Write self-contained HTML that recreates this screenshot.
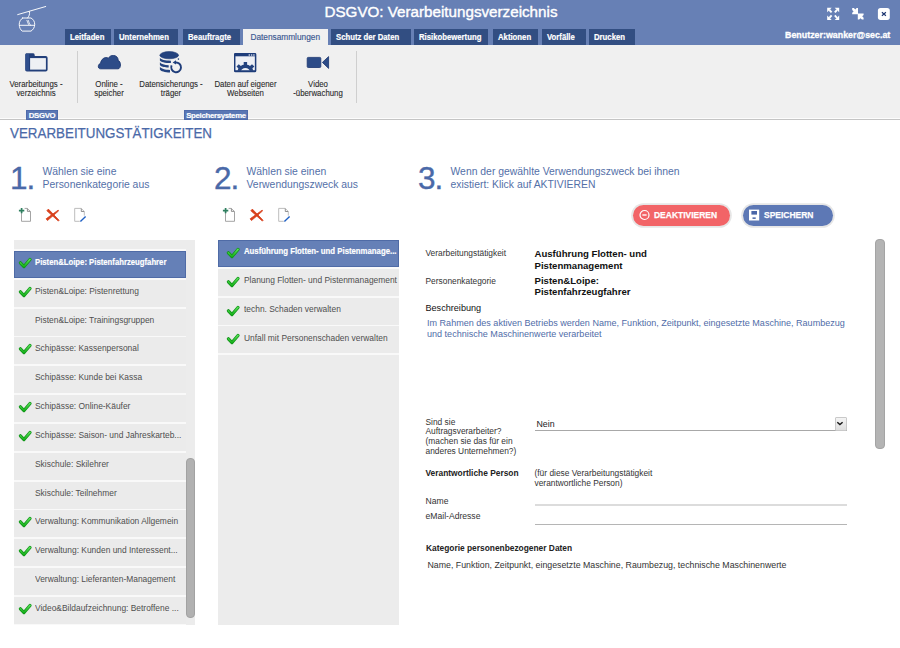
<!DOCTYPE html>
<html><head><meta charset="utf-8">
<style>
*{margin:0;padding:0;box-sizing:border-box}
html,body{width:900px;height:648px;overflow:hidden;background:#fff;font-family:"Liberation Sans",sans-serif}
.a{position:absolute;white-space:nowrap}
#hdr{position:absolute;left:0;top:0;width:900px;height:45px;background:#6780b5}
.tab{position:absolute;top:29.3px;height:15.7px;background:#324e82;color:#fff;font-weight:bold;font-size:8.8px;-webkit-text-stroke:0.2px #fff;line-height:16px;text-align:left;padding-left:4.6px}.tab span{display:inline-block;transform:scaleX(.88);transform-origin:0 0}
.tab.act{background:#f0f0f0;color:#3a5790;font-weight:normal;top:29px;height:16px;padding-left:7.4px;-webkit-text-stroke:0.15px #3a5790}.tab.act span{transform:none}
#rib{position:absolute;left:0;top:45px;width:900px;height:75px;background:#f0f0f0;border-bottom:1px solid #c4c4c4;box-shadow:inset 0 -1px 0 #fcfcfc}
.rl{position:absolute;font-size:8.7px;color:#2a2a2a;text-align:center;line-height:9.4px;white-space:nowrap;transform:scaleX(0.9);transform-origin:50% 0;-webkit-text-stroke:0.1px #2a2a2a}
.sep{position:absolute;width:1px;background:#cfcfcf}
.glab{position:absolute;top:109.8px;height:9.8px;background:#5a77b4;border:1px solid #4d6bab;color:#fff;font-weight:bold;font-size:7.8px;letter-spacing:-0.3px;line-height:9px;padding-top:0.6px;text-align:center;-webkit-text-stroke:0.15px #fff}

.step{font-size:31.5px;color:#4a69a8;line-height:30px;letter-spacing:-1px;-webkit-text-stroke:0.35px #4a69a8}
.stxt{font-size:10.4px;color:#5470a8;line-height:13px}
.btn{height:21px;border-radius:11px;box-shadow:0 0 0 1.8px #e6e6e6;color:#fff;font-weight:bold;font-size:9.8px;line-height:21px;-webkit-text-stroke:0.25px #fff}
.btn span{position:absolute;top:0}.btn .bt{transform:scaleX(0.865);transform-origin:0 50%;top:-1.2px}
.btn .ic{top:4.5px;line-height:0}
.it{position:absolute;height:27px;background:#ebebeb;font-size:9.3px;color:#4f4f4f;line-height:12px;white-space:nowrap;overflow:hidden}
.it.sel{background:#6580b7;color:#fff;font-weight:bold;border:1px solid #4f6ba6;font-size:9.1px;-webkit-text-stroke:0.2px #fff}
.it .ck{position:absolute;left:0px;top:0px}
.it .tx{position:absolute;left:21px;top:5px;transform:scaleX(0.905);transform-origin:0 0}
.it.sel .tx{transform:scaleX(0.85);margin-left:-1px;margin-top:-1.5px}
.it.sel .ck{margin-left:-1px;margin-top:-1px}
.it.c2 .ck{margin-top:1px}
.it.c2 .tx{margin-top:0.3px}
.it.c2.sel .tx{transform:scaleX(0.855);margin-left:-1px;margin-top:-0.7px}
.it.c2.sel .ck{margin-left:-1px;margin-top:0}
.lab{font-size:8.4px;color:#333;line-height:11px}
.val{font-size:9.6px;font-weight:bold;color:#111;line-height:11.3px}
.desc{font-size:9.3px;color:#4f6ca8;line-height:11px;transform:scaleX(0.973);transform-origin:0 0}
</style></head><body>
<svg width="0" height="0" style="position:absolute"><defs><linearGradient id="ckg" x1="0" y1="0" x2="0" y2="1"><stop offset="0" stop-color="#55dd55"/><stop offset="1" stop-color="#16b01a"/></linearGradient></defs></svg>

<div id="hdr">
  <svg class="a" style="left:0;top:0" width="60" height="40" viewBox="0 0 60 40">
    <g fill="none" stroke="#fff" stroke-width="0.95" stroke-linecap="round">
      <line x1="17.7" y1="14.6" x2="45.7" y2="6.5"/>
      <path d="M29.4 11.6 C30.1 14.3 28.9 16.3 27.6 18"/>
      <path d="M22.7 18 L31 18 C33.5 19.5 34.7 21.5 34.7 24.5 C34.7 27.5 33 29.8 31 31.1 L22.2 31.1 C20.5 29.8 19.25 27.5 19.25 24.5 C19.25 21.5 20.5 19.5 22.7 18 Z"/>
      <path d="M19.4 25.3 H34.6"/>
      <path d="M26.9 20.4 L28.5 24.4 M28.3 20.4 L29.7 24.4 L30.7 25.2" stroke-width="0.8"/>
    </g>
  </svg>
  <div class="a" style="left:324.5px;top:1.8px;font-size:15.2px;color:#fff;line-height:20px;-webkit-text-stroke:0.4px #fff">DSGVO: Verarbeitungsverzeichnis</div>
  <div class="tab" style="left:65px;width:46px"><span>Leitfaden</span></div>
  <div class="tab" style="left:114px;width:64px"><span>Unternehmen</span></div>
  <div class="tab" style="left:183px;width:57px"><span>Beauftragte</span></div>
  <div class="tab act" style="left:243px;width:85px;font-size:8.3px"><span>Datensammlungen</span></div>
  <div class="tab" style="left:331px;width:80px"><span>Schutz der Daten</span></div>
  <div class="tab" style="left:414px;width:74px"><span>Risikobewertung</span></div>
  <div class="tab" style="left:493px;width:45px"><span>Aktionen</span></div>
  <div class="tab" style="left:542px;width:43.8px"><span>Vorfälle</span></div>
  <div class="tab" style="left:589px;width:46px"><span>Drucken</span></div>
  <div class="a" style="left:784.7px;top:28.6px;font-size:9.6px;font-weight:bold;color:#fff;line-height:12px;-webkit-text-stroke:0.3px #fff;transform:scaleX(0.925);transform-origin:0 0">Benutzer:wanker@sec.at</div>
  <!-- window icons -->
  <svg class="a" style="left:820px;top:0px" width="80" height="30" viewBox="820 0 80 30">
    <g fill="#fff">
      <path d="M827.2 7.8 H831.7 L827.2 12.3 Z"/><path d="M829.4 10 L831.6 12.4" stroke="#fff" stroke-width="1.9"/>
      <path d="M839.2 7.8 H834.7 L839.2 12.3 Z"/><path d="M837 10 L834.8 12.4" stroke="#fff" stroke-width="1.9"/>
      <path d="M827.2 20 H831.7 L827.2 15.5 Z"/><path d="M829.4 17.8 L831.6 15.4" stroke="#fff" stroke-width="1.9"/>
      <path d="M839.2 20 H834.7 L839.2 15.5 Z"/><path d="M837 17.8 L834.8 15.4" stroke="#fff" stroke-width="1.9"/>
      <path d="M852.20 8.10 L853.90 8.10 L855.30 9.50 L856.60 8.10 L858.00 8.10 L858.00 14.20 L852.20 14.20 L852.20 12.80 L853.60 11.40 L852.20 10.00 Z"/>
      <path d="M863.60 19.60 L861.90 19.60 L860.50 18.20 L859.20 19.60 L857.80 19.60 L857.80 13.50 L863.60 13.50 L863.60 14.90 L862.20 16.30 L863.60 17.70 Z"/>
      <rect x="877.9" y="7.9" width="11.9" height="12" rx="2.6"/>
    </g>
    <path d="M881.9 12.2l4 3.6M885.9 12.2l-4 3.6" stroke="#1c3570" stroke-width="1.15"/>
  </svg>
</div>

<div id="rib">
</div>
<!-- ribbon items -->
<svg class="a" style="left:20px;top:48px" width="32" height="28" viewBox="0 0 32 28">
  <path d="M6.8 5.2 H13.2 C14.2 5.2 14.6 5.8 14.8 7.9 H25.6 C26.8 7.9 27.6 8.7 27.6 9.9 V21.5 C27.6 22.7 26.8 23.5 25.6 23.5 H7 C5.8 23.5 5.2 22.7 5.2 21.5 V6.8 C5.2 5.8 5.8 5.2 6.8 5.2 Z" fill="#223f7a"/>
  <rect x="5.8" y="6" width="3.2" height="16.5" fill="#2f4f8d"/>
  <rect x="10.1" y="10.1" width="15.8" height="11.5" fill="#eef0f4"/>
</svg>
<div class="rl" style="left:0px;width:72px;top:80px">Verarbeitungs -<br>verzeichnis</div>
<div class="sep" style="left:77px;top:51px;height:52px"></div>

<svg class="a" style="left:92px;top:50px" width="34" height="24" viewBox="0 0 34 24"><path d="M8.5 18.8 C5.5 18.8 5.6 14.2 8.6 13.3 C9 9.5 12.5 6.2 16.6 8.2 C17.5 5.8 19.8 5.5 21.5 5.5 C24.3 5.5 26.3 7.8 26.2 10.6 C29.2 11.3 29.3 18.8 26 18.8 Z" fill="#2d4c88" stroke="#1c3770" stroke-width="0.9"/></svg>
<div class="rl" style="left:84px;width:50px;top:80px">Online -<br>speicher</div>

<svg class="a" style="left:155px;top:48px" width="35" height="30" viewBox="0 0 35 30">
  <g fill="#24437f">
    <ellipse cx="14.2" cy="7.2" rx="9.3" ry="3.6" stroke="#1a3570" stroke-width="0.6"/>
    <path d="M4.9 9.8 C6 11.7 10 12.7 15.9 12.7 L15.9 15.1 C10 15.1 5.5 14 4.9 12.5 Z"/>
    <path d="M4.9 14.3 C6 16.1 9.5 17.1 13.7 17.2 L13.7 19.5 C9.5 19.4 5.5 18.4 4.9 16.9 Z"/>
    <path d="M4.9 18.8 C6 20.7 10 21.9 15 22 L15 24.5 C10 24.4 5.5 23.2 4.9 21.5 Z"/>
    <circle cx="23.4" cy="11.1" r="0.8"/>
    <path d="M17.6 14.5 L21 12.3 L21 16.6 Z"/>
  </g>
  <path d="M20.5 14.5 A4.9 4.9 0 1 1 16.6 17.4" fill="none" stroke="#1f3d7a" stroke-width="1.9"/>
</svg>
<div class="rl" style="left:131px;width:80px;top:80px">Datensicherungs -<br>träger</div>

<svg class="a" style="left:234px;top:52.9px" width="23" height="20" viewBox="0 0 23 20">
  <defs><clipPath id="wc"><rect x="1.4" y="3" width="19.6" height="14.8"/></clipPath></defs>
  <rect x="0.7" y="0.7" width="20.9" height="17.9" rx="0.8" fill="#eef0f5" stroke="#1f3d7a" stroke-width="1.5"/>
  <rect x="0.7" y="0.7" width="20.9" height="2.6" fill="#1f3d7a"/>
  <g fill="#eef0f5"><rect x="14.6" y="1.4" width="1.4" height="1.2"/><rect x="16.9" y="1.4" width="1.4" height="1.2"/><rect x="19.2" y="1.4" width="1.4" height="1.2"/></g>
  <g clip-path="url(#wc)" fill="#24437f">
    <circle cx="11.4" cy="19.6" r="8.1"/>
    <g transform="translate(11.4 19.6)">
      <rect x="-1.7" y="-10.6" width="3.4" height="3.5"/>
      <rect x="-1.7" y="-10.6" width="3.4" height="3.5" transform="rotate(47)"/>
      <rect x="-1.7" y="-10.6" width="3.4" height="3.5" transform="rotate(-47)"/>
      <rect x="-1.7" y="-10.6" width="3.4" height="3.5" transform="rotate(92)"/>
      <rect x="-1.7" y="-10.6" width="3.4" height="3.5" transform="rotate(-92)"/>
    </g>
    <circle cx="11.4" cy="19.6" r="4.7" fill="#eef0f5"/>
  </g>
  <rect x="0.7" y="17.3" width="20.9" height="1.4" fill="#1f3d7a"/>
</svg>
<div class="rl" style="left:205px;width:81px;top:80px">Daten auf eigener<br>Webseiten</div>

<svg class="a" style="left:300px;top:50px" width="36" height="24" viewBox="0 0 36 24">
  <rect x="7.2" y="7.4" width="13.6" height="10.1" rx="1" fill="#2d4c88" stroke="#1a3570" stroke-width="0.8"/>
  <path d="M22.4 12.4 L28.6 6.6 V18.4 Z" fill="#2d4c88" stroke="#1a3570" stroke-width="0.8" stroke-linejoin="round"/>
</svg>
<div class="rl" style="left:288px;width:60px;top:80px">Video<br>-überwachung</div>
<div class="sep" style="left:356px;top:51px;height:52px"></div>

<div class="glab" style="left:26px;width:32px">DSGVO</div>
<div class="glab" style="left:184px;width:64px">Speichersysteme</div>


<!-- section heading -->
<div class="a" style="left:9.8px;top:124.1px;font-size:15.2px;color:#4a69a8;line-height:18px;transform:scaleX(0.88);transform-origin:0 0;-webkit-text-stroke:0.25px #4a69a8">VERARBEITUNGSTÄTIGKEITEN</div>

<div class="a step" style="left:10px;top:163px">1.</div>
<div class="a stxt" style="left:42.5px;top:165px">Wählen sie eine<br>Personenkategorie aus</div>
<div class="a step" style="left:214px;top:163px">2.</div>
<div class="a stxt" style="left:246.5px;top:165px">Wählen sie einen<br>Verwendungszweck aus</div>
<div class="a step" style="left:418px;top:163px">3.</div>
<div class="a stxt" style="left:450.5px;top:165px">Wenn der gewählte Verwendungszweck bei ihnen<br>existiert: Klick auf AKTIVIEREN</div>

<!-- toolbar icons col1 -->
<svg class="a" style="left:0px;top:200px" width="100" height="30" viewBox="0 200 100 30">
  <g id="tb">
  <path d="M21.5 221.3 V211 M21.5 221.3 H30.5 V211.6 L27.2 208.4 H24.6" fill="none" stroke="#9a9a9a" stroke-width="0.9"/>
  <path d="M27.4 208.6 V211.4 H30.3" fill="none" stroke="#777" stroke-width="0.8"/>
  <path d="M18.9 210.6 H24.3 M21.6 207.9 V213.3" stroke="#2e7f5f" stroke-width="1.7"/>
  <path d="M46.83 210.69 L58.32 221.09 L59.08 220.31 L48.37 209.11 Z" fill="#d8401c" stroke="#d8401c" stroke-width="0.8" stroke-linejoin="round"/>
  <path d="M58.12 210.15 L46.12 218.84 L47.48 220.56 L58.68 210.85 Z" fill="#d8401c" stroke="#d8401c" stroke-width="0.8" stroke-linejoin="round"/>
  <path d="M79.8 221.3 H74.7 V208.4 H81.2 L84.3 211.5 V215.6" fill="none" stroke="#b5b5b5" stroke-width="0.9"/>
  <path d="M81.3 208.6 V211.5 H84.1" fill="none" stroke="#777" stroke-width="0.8"/>
  <path d="M80.4 221.4 L85.6 216.4" stroke="#1f60c4" stroke-width="1.4"/>
  </g>
</svg>
<svg class="a" style="left:204px;top:200px" width="100" height="30" viewBox="0 200 100 30"><use href="#tb"/></svg>

<!-- buttons -->
<div class="a btn" style="left:633.3px;top:204.7px;width:97.1px;background:#f26467"><span class="ic" style="left:6.2px"><svg width="12" height="12" viewBox="0 0 12 12"><circle cx="5.5" cy="6" r="4.5" fill="none" stroke="#fff" stroke-width="1.2"/><path d="M3.4 6h4.2" stroke="#fff" stroke-width="1.4"/></svg></span><span class="bt" style="left:21.2px">DEAKTIVIEREN</span></div>
<div class="a btn" style="left:743.2px;top:204.7px;width:89.4px;background:#5d78b5"><span class="ic" style="left:5.6px"><svg width="12" height="12" viewBox="0 0 12 12"><rect x="0" y="0.6" width="10.2" height="10.9" fill="#fff"/><rect x="2.4" y="2" width="5.6" height="3.6" fill="#4a66a8"/><rect x="3.5" y="8.4" width="3.2" height="1.5" fill="#4a66a8"/></svg></span><span class="bt" style="left:20.4px">SPEICHERN</span></div>

<!-- col1 list -->
<div class="a" style="left:14px;top:240px;width:181px;height:385px;background:#ececec"></div>
<div class="a" style="left:14px;top:249px;width:172px;height:376px;background:#f9f9f9"></div>
<div class="it sel" style="left:14px;top:251.00px;width:172px"><svg class="ck" width="24" height="20" viewBox="0 0 24 20"><path d="M6.4 11.8 L10 15.6 L16 8.4" fill="none" stroke="#0f8f17" stroke-width="3.2" stroke-linecap="round" stroke-linejoin="round"/><path d="M6.4 11.8 L10 15.6 L16 8.4" fill="none" stroke="url(#ckg)" stroke-width="1.8" stroke-linecap="round" stroke-linejoin="round"/></svg><span class="tx">Pisten&amp;Loipe: Pistenfahrzeugfahrer</span></div>
<div class="it" style="left:14px;top:279.83px;width:172px"><svg class="ck" width="24" height="20" viewBox="0 0 24 20"><path d="M6.4 11.8 L10 15.6 L16 8.4" fill="none" stroke="#0f8f17" stroke-width="3.2" stroke-linecap="round" stroke-linejoin="round"/><path d="M6.4 11.8 L10 15.6 L16 8.4" fill="none" stroke="url(#ckg)" stroke-width="1.8" stroke-linecap="round" stroke-linejoin="round"/></svg><span class="tx">Pisten&amp;Loipe: Pistenrettung</span></div>
<div class="it" style="left:14px;top:308.66px;width:172px"><span class="tx">Pisten&amp;Loipe: Trainingsgruppen</span></div>
<div class="it" style="left:14px;top:337.49px;width:172px"><svg class="ck" width="24" height="20" viewBox="0 0 24 20"><path d="M6.4 11.8 L10 15.6 L16 8.4" fill="none" stroke="#0f8f17" stroke-width="3.2" stroke-linecap="round" stroke-linejoin="round"/><path d="M6.4 11.8 L10 15.6 L16 8.4" fill="none" stroke="url(#ckg)" stroke-width="1.8" stroke-linecap="round" stroke-linejoin="round"/></svg><span class="tx">Schipässe: Kassenpersonal</span></div>
<div class="it" style="left:14px;top:366.32px;width:172px"><span class="tx">Schipässe: Kunde bei Kassa</span></div>
<div class="it" style="left:14px;top:395.15px;width:172px"><svg class="ck" width="24" height="20" viewBox="0 0 24 20"><path d="M6.4 11.8 L10 15.6 L16 8.4" fill="none" stroke="#0f8f17" stroke-width="3.2" stroke-linecap="round" stroke-linejoin="round"/><path d="M6.4 11.8 L10 15.6 L16 8.4" fill="none" stroke="url(#ckg)" stroke-width="1.8" stroke-linecap="round" stroke-linejoin="round"/></svg><span class="tx">Schipässe: Online-Käufer</span></div>
<div class="it" style="left:14px;top:423.98px;width:172px"><svg class="ck" width="24" height="20" viewBox="0 0 24 20"><path d="M6.4 11.8 L10 15.6 L16 8.4" fill="none" stroke="#0f8f17" stroke-width="3.2" stroke-linecap="round" stroke-linejoin="round"/><path d="M6.4 11.8 L10 15.6 L16 8.4" fill="none" stroke="url(#ckg)" stroke-width="1.8" stroke-linecap="round" stroke-linejoin="round"/></svg><span class="tx">Schipässe: Saison- und Jahreskarteb...</span></div>
<div class="it" style="left:14px;top:452.81px;width:172px"><span class="tx">Skischule: Skilehrer</span></div>
<div class="it" style="left:14px;top:481.64px;width:172px"><span class="tx">Skischule: Teilnehmer</span></div>
<div class="it" style="left:14px;top:510.47px;width:172px"><svg class="ck" width="24" height="20" viewBox="0 0 24 20"><path d="M6.4 11.8 L10 15.6 L16 8.4" fill="none" stroke="#0f8f17" stroke-width="3.2" stroke-linecap="round" stroke-linejoin="round"/><path d="M6.4 11.8 L10 15.6 L16 8.4" fill="none" stroke="url(#ckg)" stroke-width="1.8" stroke-linecap="round" stroke-linejoin="round"/></svg><span class="tx">Verwaltung: Kommunikation Allgemein</span></div>
<div class="it" style="left:14px;top:539.30px;width:172px"><svg class="ck" width="24" height="20" viewBox="0 0 24 20"><path d="M6.4 11.8 L10 15.6 L16 8.4" fill="none" stroke="#0f8f17" stroke-width="3.2" stroke-linecap="round" stroke-linejoin="round"/><path d="M6.4 11.8 L10 15.6 L16 8.4" fill="none" stroke="url(#ckg)" stroke-width="1.8" stroke-linecap="round" stroke-linejoin="round"/></svg><span class="tx">Verwaltung: Kunden und Interessent...</span></div>
<div class="it" style="left:14px;top:568.13px;width:172px"><span class="tx">Verwaltung: Lieferanten-Management</span></div>
<div class="it" style="left:14px;top:596.96px;width:172px"><svg class="ck" width="24" height="20" viewBox="0 0 24 20"><path d="M6.4 11.8 L10 15.6 L16 8.4" fill="none" stroke="#0f8f17" stroke-width="3.2" stroke-linecap="round" stroke-linejoin="round"/><path d="M6.4 11.8 L10 15.6 L16 8.4" fill="none" stroke="url(#ckg)" stroke-width="1.8" stroke-linecap="round" stroke-linejoin="round"/></svg><span class="tx">Video&amp;Bildaufzeichnung: Betroffene ...</span></div>
<div class="a" style="left:185.5px;top:457.5px;width:9.5px;height:160.5px;background:#b1b1b1;border:1px solid #a2a2a2;border-radius:4px"></div>

<!-- col2 list -->
<div class="a" style="left:218px;top:240px;width:181px;height:385px;background:#ececec"></div>
<div class="a" style="left:218px;top:240px;width:181px;height:115px;background:#f9f9f9"></div>

<div class="it c2 sel" style="left:218px;top:240.00px;width:181px"><svg class="ck" style="left:0px" width="24" height="20" viewBox="0 0 24 20"><path d="M10.4 11.8 L14 15.6 L20 8.4" fill="none" stroke="#0f8f17" stroke-width="3.2" stroke-linecap="round" stroke-linejoin="round"/><path d="M10.4 11.8 L14 15.6 L20 8.4" fill="none" stroke="url(#ckg)" stroke-width="1.8" stroke-linecap="round" stroke-linejoin="round"/></svg><span class="tx" style="left:25.5px">Ausführung Flotten- und Pistenmanage...</span></div>
<div class="it c2" style="left:218px;top:268.83px;width:181px"><svg class="ck" style="left:0px" width="24" height="20" viewBox="0 0 24 20"><path d="M10.4 11.8 L14 15.6 L20 8.4" fill="none" stroke="#0f8f17" stroke-width="3.2" stroke-linecap="round" stroke-linejoin="round"/><path d="M10.4 11.8 L14 15.6 L20 8.4" fill="none" stroke="url(#ckg)" stroke-width="1.8" stroke-linecap="round" stroke-linejoin="round"/></svg><span class="tx" style="left:25.5px">Planung Flotten- und Pistenmanagement</span></div>
<div class="it c2" style="left:218px;top:297.66px;width:181px"><svg class="ck" style="left:0px" width="24" height="20" viewBox="0 0 24 20"><path d="M10.4 11.8 L14 15.6 L20 8.4" fill="none" stroke="#0f8f17" stroke-width="3.2" stroke-linecap="round" stroke-linejoin="round"/><path d="M10.4 11.8 L14 15.6 L20 8.4" fill="none" stroke="url(#ckg)" stroke-width="1.8" stroke-linecap="round" stroke-linejoin="round"/></svg><span class="tx" style="left:25.5px">techn. Schaden verwalten</span></div>
<div class="it c2" style="left:218px;top:326.49px;width:181px"><svg class="ck" style="left:0px" width="24" height="20" viewBox="0 0 24 20"><path d="M10.4 11.8 L14 15.6 L20 8.4" fill="none" stroke="#0f8f17" stroke-width="3.2" stroke-linecap="round" stroke-linejoin="round"/><path d="M10.4 11.8 L14 15.6 L20 8.4" fill="none" stroke="url(#ckg)" stroke-width="1.8" stroke-linecap="round" stroke-linejoin="round"/></svg><span class="tx" style="left:25.5px">Unfall mit Personenschaden verwalten</span></div>
<!-- detail -->
<div class="a lab" style="left:425.5px;top:248.2px">Verarbeitungstätigkeit</div>
<div class="a val" style="left:534.5px;top:248.3px">Ausführung Flotten- und<br>Pistenmanagement</div>
<div class="a lab" style="left:425.5px;top:275.6px">Personenkategorie</div>
<div class="a val" style="left:534.5px;top:275.9px;line-height:10.9px">Pisten&amp;Loipe:<br>Pistenfahrzeugfahrer</div>
<div class="a lab" style="left:425.5px;top:302.7px;font-size:9.1px;color:#111">Beschreibung</div>
<div class="a desc" style="left:426.7px;top:317.5px">Im Rahmen des aktiven Betriebs werden Name, Funktion, Zeitpunkt, eingesetzte Maschine, Raumbezug<br>und technische Maschinenwerte verarbeitet</div>

<div class="a" style="left:875px;top:239px;width:9.5px;height:210px;background:#b4b4b4;border:1px solid #a4a4a4;border-radius:4px"></div>

<div class="a lab" style="left:425.5px;top:417.7px;line-height:9.7px">Sind sie<br>Auftragsverarbeiter?<br>(machen sie das für ein<br>anderes Unternehmen?)</div>
<div class="a" style="left:534.5px;top:429.5px;width:312px;height:1px;background:#a8a8a8"></div>
<div class="a lab" style="left:536.5px;top:418.7px;font-size:8.8px;color:#222">Nein</div>
<div class="a" style="left:835px;top:417px;width:11.5px;height:13.5px;border:1px solid #c9c9c9;border-radius:1px;background:linear-gradient(#f4f4f4,#dedede)"><svg width="10" height="12" viewBox="0 0 10 12" style="position:absolute;left:0;top:0"><path d="M1.3 4.3 L3.9 6.6 L6.6 4.3" fill="none" stroke="#1a1a1a" stroke-width="1.5"/></svg></div>

<div class="a lab" style="left:425.5px;top:468px;font-weight:bold;color:#222">Verantwortliche Person</div>
<div class="a lab" style="left:534.5px;top:467.5px;line-height:10px">(für diese Verarbeitungstätigkeit<br>verantwortliche Person)</div>
<div class="a lab" style="left:425.5px;top:495.5px;font-size:8.6px">Name</div>
<div class="a" style="left:534.5px;top:504px;width:312px;height:2px;background:#dcdcdc"></div>
<div class="a lab" style="left:425.5px;top:510.6px;font-size:8.6px">eMail-Adresse</div>
<div class="a" style="left:534.5px;top:524px;width:312px;height:1px;background:#b5b5b5"></div>

<div class="a lab" style="left:426px;top:542.7px;font-weight:bold;color:#222">Kategorie personenbezogener Daten</div>
<div class="a lab" style="left:427.5px;top:560px;font-size:8.8px;color:#333">Name, Funktion, Zeitpunkt, eingesetzte Maschine, Raumbezug, technische Maschinenwerte</div>
</body></html>
